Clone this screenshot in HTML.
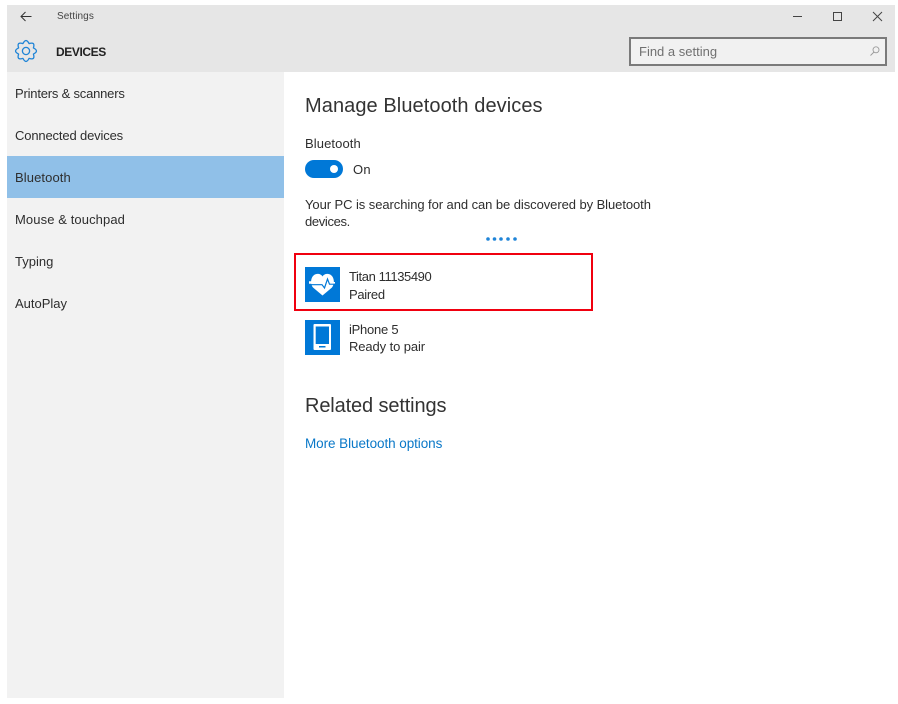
<!DOCTYPE html>
<html><head><meta charset="utf-8"><style>
html,body{margin:0;padding:0;width:898px;height:704px;overflow:hidden;background:#fff}
body{position:relative;font-family:"Liberation Sans",sans-serif;color:#2e2e2e;font-size:13px}
.a{position:absolute;white-space:nowrap}
.t{line-height:18px;height:18px}
svg{position:absolute;overflow:visible}
</style></head><body>
<div class="a" style="left:7px;top:5px;width:888px;height:67px;background:#e6e6e6"></div>
<div class="a" style="left:7px;top:72px;width:277px;height:626px;background:#f2f2f2"></div>
<div class="a" style="left:7px;top:156px;width:277px;height:42px;background:#90c0e8"></div>

<svg style="left:20px;top:11px" width="12" height="11" viewBox="0 0 12 11"><path d="M11.5 5.5H1M5.5 1L1 5.5L5.5 10" fill="none" stroke="#333" stroke-width="1"/></svg>
<div class="a t" style="left:57px;top:7.5px;font-size:10px;letter-spacing:.1px;color:#444">Settings</div>
<svg style="left:15px;top:40px" width="22" height="22" viewBox="0 0 22 22"><path d="M18.39 7.94Q24.5 11 18.39 14.06Q20.5 20.5 14.06 18.39Q11 24.5 7.94 18.39Q1.5 20.5 3.61 14.06Q-2.5 11 3.61 7.94Q1.5 1.5 7.94 3.61Q11 -2.5 14.06 3.61Q20.5 1.5 18.39 7.94Z" fill="none" stroke="#1f84d6" stroke-width="1.3" stroke-linejoin="round"/><circle cx="11" cy="11" r="3.6" fill="none" stroke="#1f84d6" stroke-width="1.3"/></svg>
<div class="a t" style="left:56px;top:43px;font-size:12px;font-weight:bold;letter-spacing:-.4px;color:#222">DEVICES</div>

<div class="a" style="left:793px;top:16px;width:9px;height:1px;background:#444"></div>
<div class="a" style="left:833px;top:12px;width:7px;height:7px;border:1px solid #444"></div>
<svg style="left:873px;top:12px" width="9" height="9" viewBox="0 0 9 9"><path d="M0 0l9 9M9 0L0 9" stroke="#444" stroke-width="1" fill="none"/></svg>

<div class="a" style="left:629px;top:37px;width:254px;height:25px;border:2px solid #7a7a7a;background:#f1f1f1"></div>
<div class="a t" style="left:639px;top:42.5px;font-size:13px;color:#707070">Find a setting</div>
<svg style="left:870px;top:46px" width="10" height="10" viewBox="0 0 10 10"><circle cx="6" cy="3.8" r="3" fill="none" stroke="#999" stroke-width=".9"/><path d="M4 6L.5 9.5" stroke="#999" stroke-width=".9"/></svg>

<div class="a t" style="left:15px;top:85px;letter-spacing:-.2px">Printers &amp; scanners</div>
<div class="a t" style="left:15px;top:127px;letter-spacing:-.15px">Connected devices</div>
<div class="a t" style="left:15px;top:169px;letter-spacing:.1px">Bluetooth</div>
<div class="a t" style="left:15px;top:211px;letter-spacing:.1px">Mouse &amp; touchpad</div>
<div class="a t" style="left:15px;top:253px">Typing</div>
<div class="a t" style="left:15px;top:295px">AutoPlay</div>

<div class="a" style="left:305px;top:93px;font-size:20px;line-height:26px;letter-spacing:.08px;color:#333">Manage Bluetooth devices</div>
<div class="a t" style="left:305px;top:135px;letter-spacing:.1px">Bluetooth</div>
<div class="a" style="left:305px;top:160px;width:38px;height:18px;border-radius:9px;background:#0078d7"></div>
<div class="a" style="left:330px;top:165px;width:8px;height:8px;border-radius:50%;background:#fff"></div>
<div class="a t" style="left:353px;top:161px;letter-spacing:.3px">On</div>
<div class="a t" style="left:305px;top:196px;letter-spacing:-.07px">Your PC is searching for and can be discovered by Bluetooth</div>
<div class="a t" style="left:305px;top:213px;letter-spacing:-.35px">devices.</div>
<svg style="left:486px;top:237px" width="32" height="4"><g fill="#1f84d8"><circle cx="2" cy="2" r="1.8"/><circle cx="8.5" cy="2" r="1.8"/><circle cx="15" cy="2" r="1.8"/><circle cx="22" cy="2" r="1.8"/><circle cx="29" cy="2" r="1.8"/></g></svg>

<div class="a" style="left:294px;top:253px;width:295px;height:54px;border:2px solid #f0000f"></div>
<div class="a" style="left:305px;top:267px;width:35px;height:35px;background:#0078d7"></div>
<svg style="left:305px;top:267px" width="35" height="35" viewBox="0 0 35 35"><path d="M17.5 28.500L8 20.500C4.500 16 6 8 11.500 7 14 6.500 16.500 7.500 17.500 9.500 18.500 7.500 21 6.500 23.500 7 29 8 30.500 16 27 20.500Z" fill="#fff"/><path d="M4 15.500H12" stroke="#fff" stroke-width="2.500"/><path d="M4 17.700H14.500L17 17.700 19.500 21 22.500 12 24.500 17.200H31" fill="none" stroke="#0078d7" stroke-width="1.200"/><path d="M25.500 15.800H30" stroke="#fff" stroke-width="1.600"/></svg>
<div class="a t" style="left:349px;top:268px;letter-spacing:-.4px">Titan 11135490</div>
<div class="a t" style="left:349px;top:286px;letter-spacing:-.3px">Paired</div>

<div class="a" style="left:305px;top:320px;width:35px;height:35px;background:#0078d7"></div>
<svg style="left:305px;top:320px" width="35" height="35" viewBox="0 0 35 35"><rect x="8.500" y="4" width="17.500" height="26" rx="1" fill="#fff"/><rect x="10.700" y="6.500" width="13.300" height="17.500" fill="#0078d7"/><rect x="14" y="26" width="6.500" height="1.500" fill="#0078d7"/></svg>
<div class="a t" style="left:349px;top:321px;letter-spacing:-.25px">iPhone 5</div>
<div class="a t" style="left:349px;top:338px;letter-spacing:-.1px">Ready to pair</div>

<div class="a" style="left:305px;top:393px;font-size:20px;line-height:26px;letter-spacing:-.13px;color:#333">Related settings</div>
<div class="a t" style="left:305px;top:435px;font-size:13.5px;letter-spacing:-.07px;color:#0a78c8">More Bluetooth options</div>
</body></html>
